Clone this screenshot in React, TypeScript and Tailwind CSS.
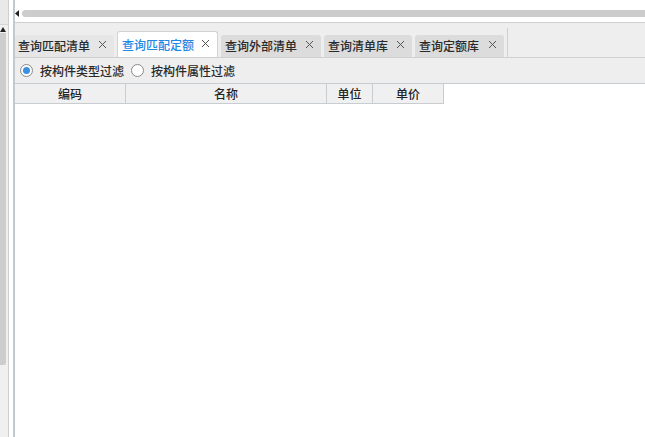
import React from 'react';

const TABS = [
  { label: '查询匹配清单', w: 'w-[99px]', kind: 'first' },
  { label: '查询匹配定额', w: 'w-[101px]', kind: 'active' },
  { label: '查询外部清单', w: 'w-[100px]', kind: 'idle' },
  { label: '查询清单库', w: 'w-[88px]', kind: 'idle' },
  { label: '查询定额库', w: 'w-[89px]', kind: 'idle' },
];

const COLS = [
  { label: '编码', w: 'w-[111px]' },
  { label: '名称', w: 'w-[201px]' },
  { label: '单位', w: 'w-[46px]' },
  { label: '单价', w: 'w-[71px]' },
];

function Close() {
  return (
    <svg width="9" height="9" viewBox="0 0 9 9" className="mb-[3px] shrink-0">
      <path d="M1 1L8 8M8 1L1 8" stroke="#555" strokeWidth="1" />
    </svg>
  );
}

export default function App() {
  return (
    <div
      className="flex h-[437px] w-[645px] overflow-hidden bg-white text-[12px] font-medium text-[#2a2a2a]"
      style={{ fontFamily: '"Noto Sans CJK SC", "Noto Sans", sans-serif' }}
    >
      {/* left side strip */}
      <div className="flex w-[8px] shrink-0 flex-col bg-[#f0f0f0]">
        <div className="h-[25px] border-b border-[#d6d6d6] bg-[#e9e9e9]" />
        <div className="flex h-[8px] items-center">
          <svg width="6" height="5" viewBox="0 0 6 5">
            <path d="M0 5L3 0L6 5Z" fill="#222" />
          </svg>
        </div>
        <div className="h-[332px] w-[6px] rounded-br-[2px] bg-[#cdcdcd]" />
      </div>
      <div className="w-[1px] shrink-0 bg-[#cfcfcf]" />
      <div className="w-[4px] shrink-0 bg-white" />
      <div className="w-[2px] shrink-0 bg-[#c3cacf]" />

      {/* main panel */}
      <div className="flex min-w-0 flex-1 flex-col">
        <div className="h-[22px] shrink-0 bg-white pt-[10px]">
          <div className="flex h-[7px] items-center">
            <svg width="4" height="7" viewBox="0 0 4 7">
              <path d="M4 0L0 3.5L4 7Z" fill="#222" />
            </svg>
            <div className="ml-[3px] h-[7px] flex-1 rounded-l-full bg-[#cccccc]" />
          </div>
        </div>
        <div className="h-[1px] bg-[#cfcfcf]" />

        {/* tab bar */}
        <div className="flex h-[34px] shrink-0 items-end bg-[#eeeeee]">
          {TABS.map((t) => (
            <div
              key={t.label}
              className={
                t.kind === 'active'
                  ? `${t.w} mr-[3px] flex h-[26px] items-center justify-between rounded-t-[3px] border border-b-0 border-[#d2d2d2] bg-white pl-[4px] pr-[7px] text-[#1e88e5]`
                  : t.kind === 'first'
                    ? `${t.w} mr-[3px] flex h-[22px] items-center justify-between rounded-t-[3px] bg-[#e6e6e6] pl-[3px] pr-[7px]`
                    : `${t.w} mr-[3px] flex h-[22px] items-center justify-between rounded-t-[3px] bg-[#dcdcdc] pl-[4px] pr-[7px]`
              }
            >
              <span className="leading-none">{t.label}</span>
              <Close />
            </div>
          ))}
          <div className="h-[29px] w-[1px] bg-[#cfcfcf]" />
        </div>
        <div className="h-[1px] bg-[#cfcfcf]" />

        {/* filter radios */}
        <div className="flex h-[25px] shrink-0 items-center bg-[#eeeeee] pl-[5px]">
          <span className="flex h-[13px] w-[13px] items-center justify-center rounded-full border border-[#8a8a8a] bg-white">
            <span className="h-[7px] w-[7px] rounded-full bg-[#3b8fe0]" />
          </span>
          <span className="ml-[7px]">按构件类型过滤</span>
          <span className="ml-[7px] h-[13px] w-[13px] rounded-full border border-[#8a8a8a] bg-white" />
          <span className="ml-[7px]">按构件属性过滤</span>
        </div>
        <div className="h-[1px] bg-[#c8cdd2]" />

        {/* table header */}
        <div className="flex h-[20px] shrink-0">
          {COLS.map((c) => (
            <div
              key={c.label}
              className={`${c.w} flex items-center justify-center border-r border-b border-[#c8cdd2] bg-[#f0f0f0] text-[#222]`}
            >
              {c.label}
            </div>
          ))}
        </div>
        <div className="flex-1 bg-white" />
      </div>
    </div>
  );
}
